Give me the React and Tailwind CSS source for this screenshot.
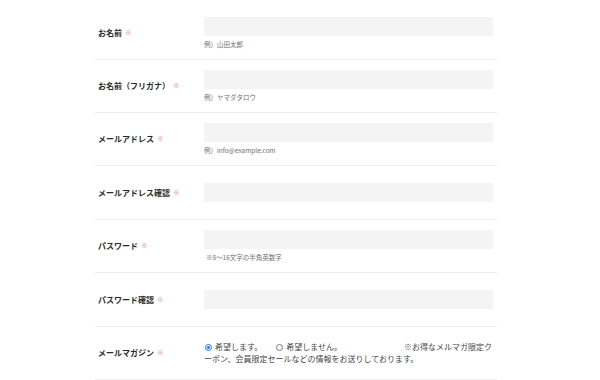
import React from "react";

const font = { fontFamily: '"Noto Sans CJK JP", "Noto Sans", sans-serif' };

function Label({ children }) {
  return (
    <div className="w-[109px] shrink-0 pl-[3px] flex items-center text-[8px] font-bold text-[#2b2b2b]">
      <span>{children}</span>
      <span className="ml-[3px] text-[6.5px] font-normal text-[#ee8096]">※</span>
    </div>
  );
}

function Input() {
  return <div className="h-[19px] w-[289px] bg-[#f4f4f4]" />;
}

function Row({ h, label, hint, hintClass = "", children }) {
  return (
    <div className={`${h} flex items-center border-b border-[#eeeeee]`}>
      <Label>{label}</Label>
      <div className="flex flex-col">
        {children || <Input />}
        {hint && (
          <div className={`mt-[3px] h-[10px] leading-[10px] text-[6.5px] text-[#707070] ${hintClass}`}>{hint}</div>
        )}
      </div>
    </div>
  );
}

export default function App() {
  return (
    <div className="w-[600px] h-[380px] bg-white overflow-hidden" style={font}>
      <div className="ml-[95px] w-[402px] pt-[6px]">
        <Row h="h-[54px]" label="お名前" hint="例）山田太郎" />
        <Row h="h-[53px]" label="お名前（フリガナ）" hint="例）ヤマダタロウ" />
        <Row h="h-[53px]" label="メールアドレス" hint="例）info@example.com" />
        <Row h="h-[54px]" label="メールアドレス確認" />
        <Row h="h-[53px]" label="パスワード" hint="※8～16文字の半角英数字" hintClass="pl-[2px]" />
        <Row h="h-[54px]" label="パスワード確認" />
        <div className="h-[53px] flex items-center border-b border-[#eeeeee]">
          <Label>メールマガジン</Label>
          <div className="w-[289px] text-[8px] leading-[12px] text-[#444]">
            <div className="flex items-center">
              <span className="ml-[1px] w-[7px] h-[7px] rounded-full border border-[#1a73e8] bg-white flex items-center justify-center">
                <span className="w-[3px] h-[3px] rounded-full bg-[#1a73e8]" />
              </span>
              <span className="ml-[3px]">希望します。</span>
              <span className="ml-[14px] w-[7px] h-[7px] rounded-full border border-[#777] bg-white" />
              <span className="ml-[3px]">希望しません。</span>
              <span className="ml-auto mr-[1px]">※お得なメルマガ限定ク</span>
            </div>
            <div>ーポン、会員限定セールなどの情報をお送りしております。</div>
          </div>
        </div>
      </div>
    </div>
  );
}
